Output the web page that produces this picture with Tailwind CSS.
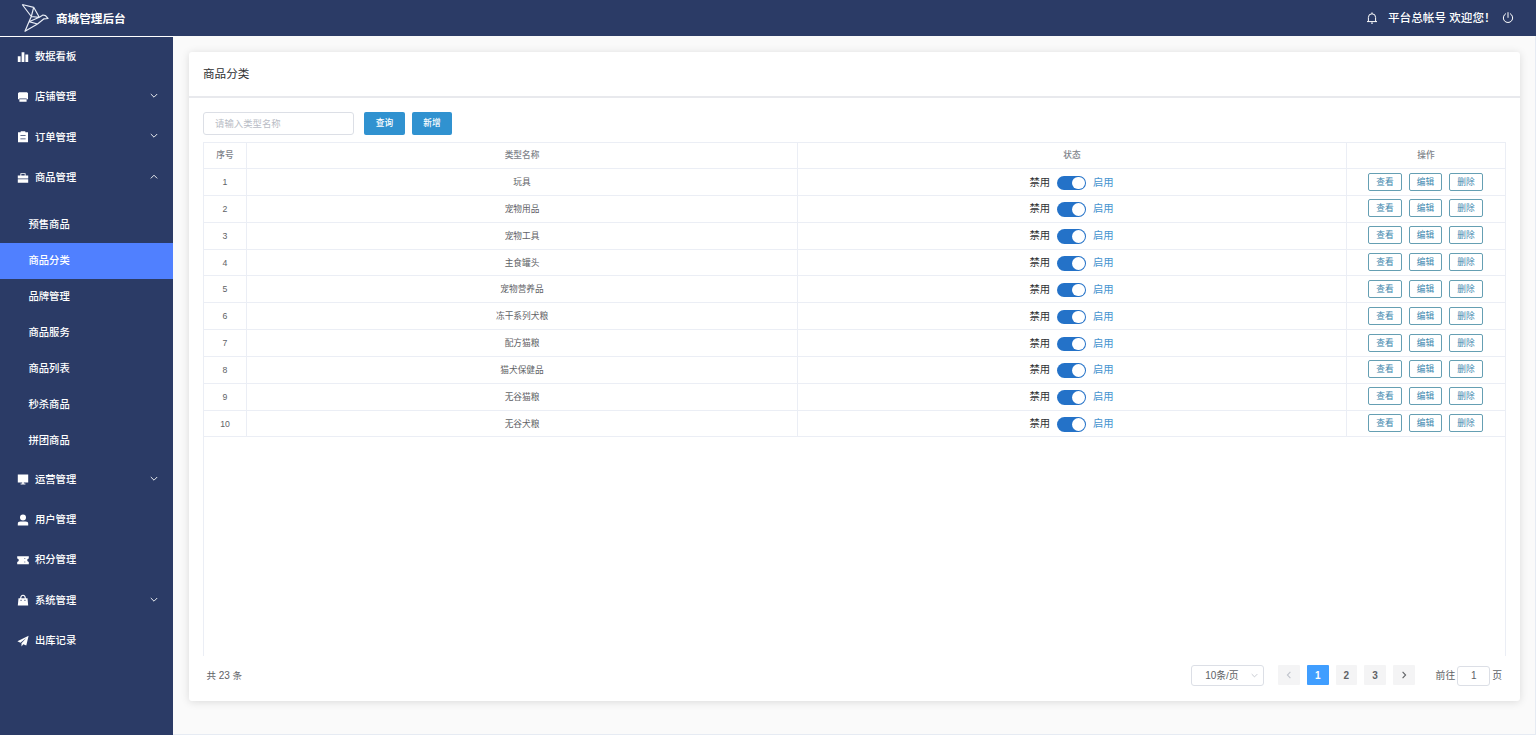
<!DOCTYPE html>
<html lang="zh-CN">

<head>
    <meta charset="UTF-8">
    <meta name="viewport" content="width=device-width, initial-scale=1.0">
    <title>商城管理后台</title>
    <script src="https://cdn.jsdelivr.net/npm/@tailwindcss/browser@4"></script>
</head>

<body class="flex flex-col h-screen overflow-hidden bg-[#fafafa] text-[#606266] font-['Liberation_Sans','Noto_Sans_CJK_SC',sans-serif]">
    <!-- Top bar -->
    <header class="flex items-center shrink-0 h-9 bg-[#2b3b66] text-white text-[11.6px]">
        <svg class="ml-[21px] w-[28px] h-[30px]" viewBox="0 0 28 30" fill="none" stroke="#e8ecf5" stroke-width="1.2" stroke-linejoin="round">
            <path d="M1.2 1.5L12.7 4.3L18.3 14.3L10.3 13.5L1.2 1.5M12.7 4.3L10.3 13.5L8 18.7L4 28.3L16.5 21L8 18.7L18.3 14.3L22 12L24.5 12.6L27 15.5L23 15.8L16.5 21" />
        </svg>
        <h1 class="ml-[7px] mt-[1px] font-bold">商城管理后台</h1>
        <svg class="ml-auto w-3 h-3" viewBox="0 0 12 12" fill="none" stroke="#fff" stroke-width="1">
            <path d="M1 9.6H11M2.4 9.6V5.4A3.6 3.6 0 0 1 9.6 5.4V9.6M6 .4V1.8M5 11.1H7" />
        </svg>
        <span class="ml-[10px] w-[102px] whitespace-nowrap font-medium">平台总帐号 欢迎您！</span>
        <svg class="ml-[12px] mr-[22px] w-3 h-3" viewBox="0 0 12 12" fill="none" stroke="#fff" stroke-width="1" stroke-linecap="round">
            <path d="M6 .6V5.4M3.7 1.7A4.7 4.7 0 1 0 8.3 1.7" />
        </svg>
    </header>

    <div class="flex flex-1 min-h-0">
        <!-- Sidebar -->
        <aside class="w-[173px] shrink-0 bg-[#2b3b66] border-t border-white text-white text-[10.3px] font-medium">
            <div class="flex items-center h-[40px] pl-[17px] pr-[15px]">
                <svg class="w-3 h-3 mr-[6px]" viewBox="0 0 12 12" fill="#fff"><path d="M.8 5.3H3.6V11H.8zM4.6 1.2H7.4V11H4.6zM8.4 3.6H11.2V11H8.4z" /></svg>
                数据看板
            </div>
            <div class="flex items-center h-[40px] pl-[17px] pr-[15px]">
                <svg class="w-3 h-3 mr-[6px]" viewBox="0 0 12 12" fill="#fff"><path d="M2 1.2H10L11 2.2V8.2H9.7V7.6H2.3V8.2H1V2.2zM2.4 8.2H9.6V10.8H2.4z" /></svg>
                店铺管理
                <svg class="ml-auto w-2 h-2 mb-[2px]" viewBox="0 0 8 8" fill="none" stroke="#fff" stroke-width=".9"><path d="M.8 2L4 5.2L7.2 2" /></svg>
            </div>
            <div class="flex items-center h-[40.6px] pl-[17px] pr-[15px]">
                <svg class="w-3 h-3 mr-[6px]" viewBox="0 0 12 12" fill="#fff"><path fill-rule="evenodd" d="M1 1.3H3.7V.2H8.3V1.3H11V11.3H1zM3.4 4.2V5.1H8.6V4.2zM3.4 7.4V8.3H8.6V7.4z" /></svg>
                订单管理
                <svg class="ml-auto w-2 h-2 mb-[2px]" viewBox="0 0 8 8" fill="none" stroke="#fff" stroke-width=".9"><path d="M.8 2L4 5.2L7.2 2" /></svg>
            </div>
            <div class="flex items-center h-[40.6px] pl-[17px] pr-[15px]">
                <svg class="w-3 h-3 mr-[6px]" viewBox="0 0 12 12" fill="#fff"><path fill-rule="evenodd" d="M3.4 3.4V1.2H8.6V3.4H11.2V6.4H.8V3.4zM4.3 3.4H7.7V2.1H4.3zM.8 7.2H11.2V10.8H.8z" /></svg>
                商品管理
                <svg class="ml-auto w-2 h-2 mb-[1px]" viewBox="0 0 8 8" fill="none" stroke="#fff" stroke-width=".9"><path d="M.8 5.4L4 2.2L7.2 5.4" /></svg>
            </div>
            <ul class="pt-[9px]">
                <li class="flex items-center h-9 pl-[28.5px]">预售商品</li>
                <li class="flex items-center h-9 pl-[28.5px] bg-[#5080ff]">商品分类</li>
                <li class="flex items-center h-9 pl-[28.5px]">品牌管理</li>
                <li class="flex items-center h-9 pl-[28.5px]">商品服务</li>
                <li class="flex items-center h-9 pl-[28.5px]">商品列表</li>
                <li class="flex items-center h-9 pl-[28.5px]">秒杀商品</li>
                <li class="flex items-center h-9 pl-[28.5px]">拼团商品</li>
            </ul>
            <div class="flex items-center h-[40.3px] pl-[17px] pr-[15px]">
                <svg class="w-3 h-3 mr-[6px]" viewBox="0 0 12 12" fill="#fff"><path d="M.8 1.4H11.2V9.6H.8zM5.2 9.6H6.8V10.6H8.4V11.4H3.6V10.6H5.2z" /></svg>
                运营管理
                <svg class="ml-auto w-2 h-2 mb-[1px]" viewBox="0 0 8 8" fill="none" stroke="#fff" stroke-width=".9"><path d="M.8 2L4 5.2L7.2 2" /></svg>
            </div>
            <div class="flex items-center h-[40.3px] pl-[17px] pr-[15px]">
                <svg class="w-3 h-3 mr-[6px]" viewBox="0 0 12 12" fill="#fff"><circle cx="6" cy="3.6" r="3" /><path d="M.8 11.4V9.8Q.8 7.4 3.4 7.4H8.6Q11.2 7.4 11.2 9.8V11.4z" /></svg>
                用户管理
            </div>
            <div class="flex items-center h-[40.3px] pl-[17px] pr-[15px]">
                <svg class="w-3 h-3 mr-[6px]" viewBox="0 0 12 12" fill="#fff"><path fill-rule="evenodd" d="M.2 2.2H11.8V4.6Q10.2 4.8 10.2 6.2T11.8 7.9V10.2H.2V7.9Q1.8 7.6 1.8 6.2T.2 4.6zM7.5 4V5H8.2V4zM7.5 7.4V8.4H8.2V7.4z" /></svg>
                积分管理
            </div>
            <div class="flex items-center h-[40.3px] pl-[17px] pr-[15px]">
                <svg class="w-3 h-3 mr-[6px]" viewBox="0 0 12 12" fill="#fff"><path fill-rule="evenodd" d="M1.5 4.3H3.1Q3.3 .8 6 .8T8.9 4.3H10.5L11.2 11.4H.8zM4.2 4.3H7.8Q7.6 1.8 6 1.8T4.2 4.3zM3.6 5.8V7H4.5V5.8zM7.5 5.8V7H8.4V5.8z" /></svg>
                系统管理
                <svg class="ml-auto w-2 h-2 mb-[1px]" viewBox="0 0 8 8" fill="none" stroke="#fff" stroke-width=".9"><path d="M.8 2L4 5.2L7.2 2" /></svg>
            </div>
            <div class="flex items-center h-[40.3px] pl-[17px] pr-[15px]">
                <svg class="w-3 h-3 mr-[6px]" viewBox="0 0 12 12" fill="#fff"><path d="M11.6 .8L.4 6.2L3.4 7.7L9.6 2.8L4.5 8.3V11.5L6.3 9.2L9.3 10.6z" /></svg>
                出库记录
            </div>
        </aside>

        <!-- Content -->
        <main class="flex flex-1 min-w-0 pt-4 pl-4 pr-[15px] pb-[33px] border-r border-b border-[#e6ebf3]">
            <div class="flex flex-col flex-1 min-w-0 bg-white rounded-[3px] shadow-[0_1px_9px_rgba(0,0,0,0.13)]">
                <div class="flex items-center h-[45.5px] shrink-0 pl-[14px] border-b-2 border-[#e8e9ed] text-[11.6px] text-[#303133]">商品分类</div>

                <!-- Search -->
                <div class="flex items-center mt-[14.5px] pl-[14px] shrink-0">
                    <input type="text" placeholder="请输入类型名称" class="w-[151px] h-[23px] px-[11px] border border-[#dcdfe6] rounded-[3px] text-[9.4px] placeholder:text-[#b8bcc5]">
                    <button class="ml-[10px] w-[41px] h-[23px] rounded-[2px] bg-[#3092d0] text-white text-[8.7px] font-medium">查询</button>
                    <button class="ml-[7px] w-[40px] h-[23px] rounded-[2px] bg-[#3092d0] text-white text-[8.7px] font-medium">新增</button>
                </div>

                <!-- Table -->
                <div class="flex flex-col mt-[7px] ml-[14px] mr-[14px] h-[514px] shrink-0 border border-b-0 border-[#ebeef5] text-[8.7px]">
                    <div class="grid grid-cols-[43px_551px_549px_1fr] h-[26px] shrink-0 border-b border-[#ebeef5] text-center leading-[25px] text-[#80838a] font-medium">
                        <div class="border-r border-[#ebeef5]">序号</div>
                        <div class="border-r border-[#ebeef5]">类型名称</div>
                        <div class="border-r border-[#ebeef5]">状态</div>
                        <div>操作</div>
                    </div>
                    <div id="rows"></div>
                </div>

                <!-- Pagination -->
                <div class="flex items-center mt-[8px] pl-[17.5px] pr-[18px] h-[22px] text-[9.8px]">
                    <span class="mt-[2px] text-[9.5px]">共 <span class="text-[10px]">23</span> 条</span>
                    <div class="ml-auto flex items-center justify-between w-[73px] h-[21px] pl-[13px] pr-[5px] border border-[#dcdfe6] rounded-[3px]">
                        <span class="mt-[2px]"><span class="text-[10px]">10</span>条/页</span>
                        <svg class="w-[7px] h-[7px] mt-[1px]" viewBox="0 0 8 8" fill="none" stroke="#c0c4cc" stroke-width="1"><path d="M.8 2.4L4 5.6L7.2 2.4" /></svg>
                    </div>
                    <div class="flex gap-[7px] ml-[14px] text-[10px] font-bold">
                        <span class="flex items-center justify-center w-[21.7px] h-[20px] bg-[#f4f4f5] rounded-[1px]">
                            <svg class="w-2 h-2" viewBox="0 0 8 8" fill="none" stroke="#c0c4cc" stroke-width="1.1"><path d="M5.4 .8L2.4 4L5.4 7.2" /></svg>
                        </span>
                        <span class="flex items-center justify-center w-[21.7px] h-[20px] pt-[1px] bg-[#409eff] text-white rounded-[1px]">1</span>
                        <span class="flex items-center justify-center w-[21.7px] h-[20px] pt-[1px] bg-[#f4f4f5] rounded-[1px]">2</span>
                        <span class="flex items-center justify-center w-[21.7px] h-[20px] pt-[1px] bg-[#f4f4f5] rounded-[1px]">3</span>
                        <span class="flex items-center justify-center w-[21.7px] h-[20px] bg-[#f4f4f5] rounded-[1px]">
                            <svg class="w-2 h-2" viewBox="0 0 8 8" fill="none" stroke="#606266" stroke-width="1.1"><path d="M2.6 .8L5.6 4L2.6 7.2" /></svg>
                        </span>
                    </div>
                    <span class="ml-[21px] mt-[2px]">前往</span>
                    <span class="flex items-center justify-center w-[33px] h-[20px] mt-[1px] mx-[2px] border border-[#dcdfe6] rounded-[3px] text-[10px]">1</span>
                    <span class="mt-[2px]">页</span>
                </div>
            </div>
        </main>
    </div>

    <script>
        const names = ["玩具", "宠物用品", "宠物工具", "主食罐头", "宠物营养品", "冻干系列犬粮", "配方猫粮", "猫犬保健品", "无谷猫粮", "无谷犬粮"];

        // Build one table row per category
        document.getElementById("rows").innerHTML = names.map((name, i) => `
            <div class="grid grid-cols-[43px_551px_549px_1fr] h-[26.85px] border-b border-[#ebeef5] text-center leading-[26px]">
                <div class="border-r border-[#ebeef5]">${i + 1}</div>
                <div class="border-r border-[#ebeef5]">${name}</div>
                <div class="flex items-center justify-center pr-[1px] border-r border-[#ebeef5] text-[10.3px]">
                    <span class="mt-[0.5px] text-[#303133]">禁用</span>
                    <span class="flex items-center justify-end w-[29px] h-[14.5px] mt-[1px] ml-[6.5px] mr-[7.5px] pr-[1px] rounded-full bg-[#2472c8]">
                        <span class="w-[12.5px] h-[12.5px] rounded-full bg-white"></span>
                    </span>
                    <span class="mt-[0.5px] text-[#4593cf]">启用</span>
                </div>
                <div class="flex items-center justify-center gap-[7px] pr-[1px] pb-[1.5px] text-[#3c87ae]">
                    <button class="w-[34px] h-[18px] border border-[#659fb3] rounded-[2px] leading-[16px]">查看</button>
                    <button class="w-[33px] h-[18px] border border-[#659fb3] rounded-[2px] leading-[16px]">编辑</button>
                    <button class="w-[34px] h-[18px] border border-[#659fb3] rounded-[2px] leading-[16px]">删除</button>
                </div>
            </div>`).join("");
    </script>
</body>

</html>
